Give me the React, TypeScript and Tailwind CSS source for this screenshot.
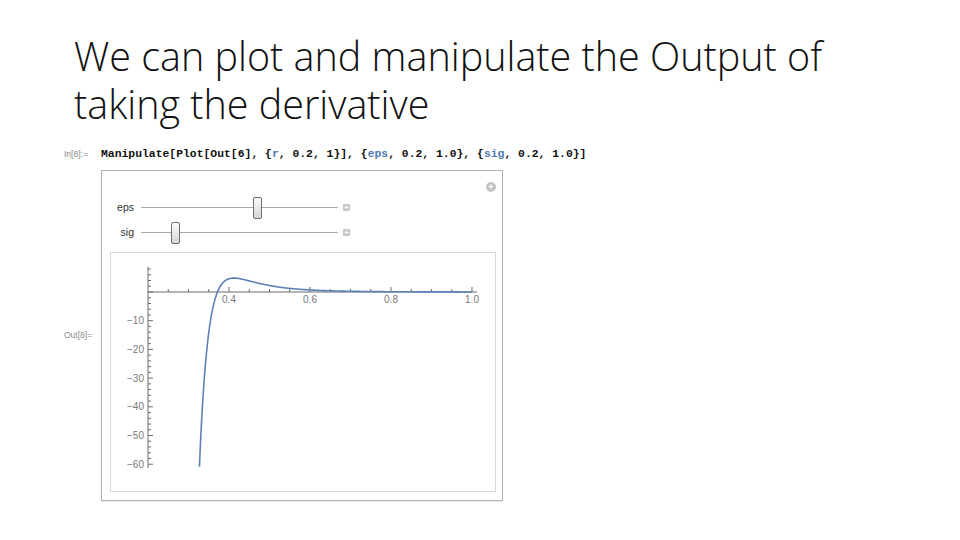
import React from 'react'

const plotW = 386
const plotH = 240

// data coords -> svg coords inside the plot box
const px = (r: number) => 37 + (r - 0.2) * 405
const py = (v: number) => 39 - v * 2.87

function force(r: number, eps: number, sig: number) {
  const u = Math.pow(sig / r, 6)
  return ((4 * eps) / r) * (6 * u - 12 * u * u)
}

function curvePath(eps: number, sig: number) {
  const pts: string[] = []
  for (let r = 0.3; r <= 1.0001; r += 0.001) {
    const v = force(r, eps, sig)
    if (v < -61) continue
    pts.push(`${px(r).toFixed(2)},${py(v).toFixed(2)}`)
  }
  return 'M' + pts.join(' L')
}

function Plot() {
  const xMinor: number[] = []
  for (let i = 5; i <= 20; i++) xMinor.push(i * 0.05)
  const yTicks: number[] = []
  for (let v = -60; v <= 8; v += 2) yTicks.push(v)

  return (
    <svg width={plotW} height={plotH} className="block">
      {/* axes */}
      <line x1={37} y1={py(0)} x2={px(1.012)} y2={py(0)} stroke="#6b6b6b" strokeWidth={1} />
      <line x1={37} y1={py(8.8)} x2={37} y2={py(-61.3)} stroke="#6b6b6b" strokeWidth={1} />
      {xMinor.map((r) => {
        const major = Math.abs((r * 10) % 2) < 0.01 || Math.abs((r * 10) % 2 - 2) < 0.01
        return (
          <line
            key={r}
            x1={px(r)}
            x2={px(r)}
            y1={py(0)}
            y2={py(0) - (major ? 5 : 3)}
            stroke="#6b6b6b"
            strokeWidth={1}
          />
        )
      })}
      {yTicks.map((v) => (
        <line
          key={v}
          x1={37}
          x2={37 + (v % 10 === 0 ? 5 : 3)}
          y1={py(v)}
          y2={py(v)}
          stroke="#6b6b6b"
          strokeWidth={1}
        />
      ))}
      {[0.4, 0.6, 0.8, 1.0].map((r) => (
        <text
          key={r}
          x={px(r)}
          y={py(0) + 11}
          textAnchor="middle"
          fontSize={10}
          fill="#7a7a7a"
          fontFamily="Liberation Sans, Arial, sans-serif"
        >
          {r.toFixed(1)}
        </text>
      ))}
      {[-10, -20, -30, -40, -50, -60].map((v) => (
        <text
          key={v}
          x={33}
          y={py(v) + 3.5}
          textAnchor="end"
          fontSize={10}
          fill="#7a7a7a"
          fontFamily="Liberation Sans, Arial, sans-serif"
        >
          {'\u2212' + Math.abs(v)}
        </text>
      ))}
      <path d={curvePath(0.67, 0.331)} fill="none" stroke="#5e81b5" strokeWidth={1.6} />
    </svg>
  )
}

function Slider({ label, value }: { label: string; value: number }) {
  const frac = (value - 0.2) / 0.8
  return (
    <div className="flex h-[25px] items-center">
      <div className="w-[32px] text-right text-[10.5px] text-[#333]">{label}</div>
      <div className="relative ml-[7px] h-[22px] w-[197px]">
        <div className="absolute left-0 right-0 top-[10px] h-px bg-[#a8a8a8]" />
        <div
          className="absolute top-0 h-[22px] w-[9px] rounded-[2px] border border-[#6e6e6e] bg-gradient-to-b from-[#fbfbfb] to-[#d6d6d6]"
          style={{ left: frac * 197 - 4 }}
        />
      </div>
      <div className="ml-[5px] flex h-[7px] w-[7px] items-center justify-center bg-[#c8c8c8]">
        <span className="text-[7px] leading-none font-bold text-white">+</span>
      </div>
    </div>
  )
}

export default function App() {
  const blue = 'text-[#4f77b2]'
  return (
    <div
      className="h-[540px] w-[960px] overflow-hidden bg-white"
      style={{ fontFamily: 'Liberation Sans, Arial, sans-serif' }}
    >
      <h1
        className="pl-[74px] pt-[32px] text-[39.5px] leading-[48px] font-light text-[#111]"
        style={{ fontFamily: '"Open Sans", sans-serif' }}
      >
        We can plot and manipulate the Output of
        <br />
        taking the derivative
      </h1>

      <div className="mt-[18px] flex items-center">
        <div className="w-[101px] pl-[64px] text-[8.5px] text-[#8a8a8a]">In[8]:=</div>
        <div
          className="text-[11.4px] font-bold text-[#111]"
          style={{ fontFamily: '"Liberation Mono", monospace' }}
        >
          Manipulate[Plot[Out[6], {'{'}
          <span className={blue}>r</span>, 0.2, 1{'}'}], {'{'}
          <span className={blue}>eps</span>, 0.2, 1.0{'}'}, {'{'}
          <span className={blue}>sig</span>, 0.2, 1.0{'}'}]
        </div>
      </div>

      <div className="mt-[7px] flex items-center">
        <div className="w-[101px] pl-[64px] text-[8.5px] text-[#8a8a8a]">Out[8]=</div>
        <div className="relative h-[331px] w-[402px] border border-[#b4b4b4] bg-white shadow-[0_1px_1px_rgba(0,0,0,0.08)]">
          <div className="absolute right-[6px] top-[11px] flex h-[10px] w-[10px] items-center justify-center rounded-full bg-[#c4c4c4]">
            <span className="text-[9px] leading-none font-bold text-white">+</span>
          </div>
          <div className="pt-[24px]">
            <Slider label="eps" value={0.67} />
            <Slider label="sig" value={0.34} />
          </div>
          <div className="ml-[8px] mt-[7px] h-[240px] w-[386px] border border-[#d9d9d9]">
            <Plot />
          </div>
        </div>
      </div>
    </div>
  )
}
